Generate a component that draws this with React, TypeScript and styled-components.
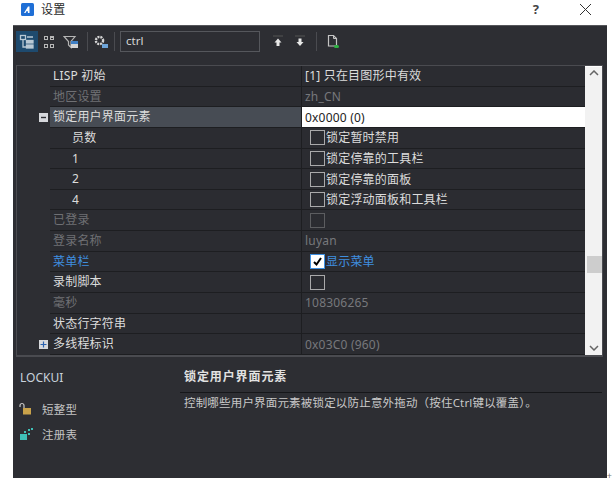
import React from "react";
import styled, { createGlobalStyle } from "styled-components";

const Global = createGlobalStyle`
  html, body { margin: 0; padding: 0; background: #fff; }
  body { font-family: "Noto Sans", "Noto Sans CJK SC", sans-serif; font-size: 12px; }
`;
const Page = styled.div`
  width: 612px; height: 482px; overflow: hidden; background: #fff; display: flex; flex-direction: column; position: relative;
`;
const TitleBar = styled.div`
  height: 25px; display: flex; align-items: center; padding: 0 20px 7px 21px; box-sizing: border-box; color: #333;
`;
const TitleText = styled.span`
  margin-left: 7px; font-size: 12px; letter-spacing: 0.3px; color: #2a2a2a;
`;
const HelpMark = styled.span`
  margin-left: auto; margin-right: 40px; font-size: 13px; font-weight: 700; color: #444;
`;
const Dialog = styled.div`
  margin-left: 13px; width: 594px; height: 453px; background: #2d2e33; border-top: 1px solid #55565a; box-sizing: border-box; display: flex; flex-direction: column;
`;
const Toolbar = styled.div`
  height: 25px; margin-top: 3px; padding-left: 3px; display: flex; align-items: center;
`;
const ToolBtn = styled.div<{ $active?: boolean; $w?: number }>`
  width: ${(p) => p.$w ?? 22}px; height: 21px; display: flex; align-items: center; justify-content: center;
  background: ${(p) => (p.$active ? "#1e4a6e" : "transparent")};
`;
const Sep = styled.div`
  width: 1px; height: 19px; background: #4a4b50; margin: 0 5px;
`;
const SearchBox = styled.div`
  width: 140px; height: 21px; border: 1px solid #55575c; box-sizing: border-box; color: #d8d8d8; font-size: 11.5px; line-height: 18px; padding-left: 5px; margin-right: 7px;
`;
const Grid = styled.div`
  margin: 11px 4px 0 3px; display: flex; height: 292px; border: 1px solid #4a4b50; border-bottom-width: 2px; box-sizing: border-box;
`;
const Rows = styled.div`
  flex: 1; display: flex; flex-direction: column; min-width: 0;
`;
const Row = styled.div`
  height: 20.66px; box-sizing: border-box; display: grid; grid-template-columns: 33px 251px 1fr; border-bottom: 1px solid #1d1e21;
`;
const Gutter = styled.div`
  background: #2d2e33; display: flex; align-items: center; justify-content: flex-end; padding-right: 2px; margin-bottom: -1px;
`;
const Name = styled.div<{ $tone?: string; $indent?: boolean; $selected?: boolean }>`
  background: ${(p) => (p.$selected ? "#474c54" : "#2b2c31")};
  color: ${(p) => (p.$tone === "off" ? "#6f7074" : p.$tone === "link" ? "#3f8fe0" : "#dcdcdc")};
  padding-left: ${(p) => (p.$indent ? 22 : 3)}px; font-size: 12px; line-height: 19px; white-space: nowrap; letter-spacing: 0.2px;
`;
const Value = styled.div<{ $tone?: string; $editing?: boolean }>`
  background: ${(p) => (p.$editing ? "#fff" : "#2b2c31")};
  color: ${(p) => (p.$editing ? "#222" : p.$tone === "off" ? "#77787c" : p.$tone === "link" ? "#3f8fe0" : "#dcdcdc")};
  border-left: 1px solid #1d1e21; padding-left: ${(p) => (p.$editing ? 3 : 3)}px; display: flex; align-items: center; font-size: 12px; line-height: 19px; white-space: nowrap; letter-spacing: 0.2px;
`;
const CheckValue = styled.div`
  margin-left: 5px; display: flex; align-items: center; gap: 1px;
`;
const Box = styled.div<{ $off?: boolean; $checked?: boolean }>`
  width: 15px; height: 15px; box-sizing: border-box; border: 1px solid ${(p) => (p.$off ? "#5c5d60" : p.$checked ? "#3f8fe0" : "#a9a9aa")};
  background: ${(p) => (p.$checked ? "#fff" : "transparent")}; display: flex; align-items: center; justify-content: center;
`;
const Expander = styled.div`
  width: 9px; height: 9px; background: #d6d8dc; position: relative; display: flex; align-items: center; justify-content: center;
`;
const Scrollbar = styled.div`
  width: 17px; background: #f2f2f2; display: flex; flex-direction: column; align-items: center; padding: 3px 0 4px; box-sizing: border-box; justify-content: space-between; position: relative; border-top: 1px solid #fff;
`;
const Thumb = styled.div`
  position: absolute; top: 189px; left: 2px; width: 15px; height: 17px; background: #cdcdcd;
`;
const Info = styled.div`
  flex: 1; display: flex; padding-left: 7px; margin-top: 8px;
`;
const InfoLeft = styled.div`
  width: 160px; color: #d0d0d0;
`;
const Sysvar = styled.div`
  font-size: 12px; line-height: 16px; color: #c8d2dc; margin-top: 5px; margin-bottom: 15px; margin-left: 0;
`;
const Prop = styled.div`
  display: flex; align-items: center; gap: 9px; font-size: 11.5px; height: 16px; margin-bottom: 8.5px; margin-left: -1px; color: #c4c4c4; letter-spacing: 0.3px;
`;
const InfoRight = styled.div`
  flex: 1; margin-right: 5px;
`;
const InfoTitle = styled.div`
  font-size: 12px; font-weight: 700; color: #e2e2e2; height: 27px; line-height: 24px; border-bottom: 1px solid #16171a; padding-left: 4px; letter-spacing: 0.9px; margin-top: 0;
`;
const InfoBody = styled.div`
  font-size: 11.5px; color: #c8c8c8; padding-left: 4px; line-height: 20px; white-space: nowrap; letter-spacing: 0.18px;
`;
const Tick = styled.span`
  position: absolute; right: 0; bottom: 2px; font-size: 9px; color: #777; line-height: 9px;
`;

const ico = { width: 16, height: 16, viewBox: "0 0 16 16" };
const Minus = () => <Expander><svg width="7" height="7" viewBox="0 0 7 7"><path d="M1 3.5h5" stroke="#2d2e33" strokeWidth="1.4" /></svg></Expander>;
const Plus = () => <Expander><svg width="7" height="7" viewBox="0 0 7 7"><path d="M.5 3.5h6M3.5.5v6" stroke="#2a62b0" strokeWidth="1.2" /></svg></Expander>;

type R = { name: string; val?: string; tone?: string; indent?: boolean; selected?: boolean; editing?: boolean; check?: boolean; checked?: boolean; exp?: "minus" | "plus"; valTone?: string };
const rows: R[] = [
  { name: "LISP 初始", val: "[1] 只在目图形中有效" },
  { name: "地区设置", val: "zh_CN", tone: "off", valTone: "off" },
  { name: "锁定用户界面元素", val: "0x0000 (0)", selected: true, editing: true, exp: "minus" },
  { name: "员数", val: "锁定暂时禁用", indent: true, check: true },
  { name: "1", val: "锁定停靠的工具栏", indent: true, check: true },
  { name: "2", val: "锁定停靠的面板", indent: true, check: true },
  { name: "4", val: "锁定浮动面板和工具栏", indent: true, check: true },
  { name: "已登录", tone: "off", check: true, valTone: "off" },
  { name: "登录名称", val: "luyan", tone: "off", valTone: "off" },
  { name: "菜单栏", val: "显示菜单", tone: "link", valTone: "link", check: true, checked: true },
  { name: "录制脚本", check: true },
  { name: "毫秒", val: "108306265", tone: "off", valTone: "off" },
  { name: "状态行字符串", val: "" },
  { name: "多线程标识", val: "0x03C0 (960)", exp: "plus", valTone: "off" },
];

export default function App() {
  return (
    <Page>
      <Global />
      <TitleBar>
        <svg width="13" height="13" viewBox="0 0 13 13"><rect width="13" height="13" rx="1.5" fill="#1f6fd6" /><path d="M3 10 L7 3.5 h1.5 v6.5 h-1.6 v-1.8 h-1.6 L4.6 10z" fill="#fff" /></svg>
        <TitleText>设置</TitleText>
        <HelpMark>?</HelpMark>
        <svg width="13" height="13" viewBox="0 0 13 13"><path d="M1 1l11 11M12 1L1 12" stroke="#333" strokeWidth="1" /></svg>
      </TitleBar>
      <Dialog>
        <Toolbar>
          <ToolBtn $active>
            <svg {...ico}><g fill="none" stroke="#b9c8d4" strokeWidth="1.3"><rect x="1.5" y="1.5" width="5" height="4" /><path d="M8 3h6M4 6v7h3" /><rect x="7.5" y="6.5" width="6.5" height="2.5" fill="#b9c8d4" /><rect x="7.5" y="11" width="6.5" height="3" fill="#b9c8d4" /></g></svg>
          </ToolBtn>
          <ToolBtn>
            <svg {...ico}><g fill="#b8b8b8"><rect x="3" y="2" width="4" height="4" /><rect x="9" y="2" width="4" height="4" /><rect x="3" y="10" width="4" height="4" /><rect x="9" y="10" width="4" height="4" /></g><g fill="#2d2e33"><rect x="4" y="3" width="2" height="2" /><rect x="10" y="4" width="2" height="1" /><rect x="4" y="11" width="2" height="2" /><rect x="10" y="11" width="2" height="2" /></g></svg>
          </ToolBtn>
          <ToolBtn>
            <svg {...ico}><path d="M1 2.5h11L8 7.5v6L5.5 11V7.5z" fill="none" stroke="#b5b5b5" strokeWidth="1.2" /><rect x="8" y="7" width="7" height="3" fill="#3f7fc4" /><rect x="8" y="10" width="7" height="4" fill="#d4d4d4" /></svg>
          </ToolBtn>
          <Sep />
          <ToolBtn $w={16}>
            <svg {...ico}><circle cx="6.5" cy="6.5" r="3.6" fill="none" stroke="#d5d5d5" strokeWidth="2.4" strokeDasharray="2 .9" /><rect x="9" y="10" width="6" height="4" fill="#6ea4d8" /></svg>
          </ToolBtn>
          <Sep />
          <SearchBox>ctrl</SearchBox>
          <ToolBtn>
            <svg {...ico}><path d="M3 2h10" stroke="#555" /><path d="M8 4.5l3.5 4H9.5V12h-3V8.5h-2z" fill="#e8e8e8" /></svg>
          </ToolBtn>
          <ToolBtn>
            <svg {...ico}><path d="M3 2h10" stroke="#555" /><path d="M8 12l3.5-4H9.5V4.5h-3V8h-2z" fill="#e8e8e8" /></svg>
          </ToolBtn>
          <Sep />
          <ToolBtn>
            <svg {...ico}><path d="M3.5 1.5h5l3 3V12h-8z" fill="none" stroke="#c4c4c4" strokeWidth="1.2" /><path d="M8.5 1.5v3h3" fill="none" stroke="#c4c4c4" /><rect x="9" y="11" width="5" height="3" rx="1.5" fill="#2fb344" /></svg>
          </ToolBtn>
        </Toolbar>
        <Grid>
          <Rows>
            {rows.map((r) => (
              <Row key={r.name}>
                <Gutter>{r.exp === "minus" ? <Minus /> : r.exp === "plus" ? <Plus /> : null}</Gutter>
                <Name $tone={r.tone} $indent={r.indent} $selected={r.selected}>{r.name}</Name>
                <Value $tone={r.valTone} $editing={r.editing}>
                  {r.check ? (
                    <CheckValue>
                      <Box $off={r.valTone === "off"} $checked={r.checked}>
                        {r.checked && <svg width="11" height="11" viewBox="0 0 11 11"><path d="M2 6l2.5 2.5L9 2" fill="none" stroke="#000" strokeWidth="2" /></svg>}
                      </Box>
                      {r.val}
                    </CheckValue>
                  ) : r.val}
                </Value>
              </Row>
            ))}
          </Rows>
          <Scrollbar>
            <svg width="10" height="6" viewBox="0 0 10 6"><path d="M1 5l4-4 4 4" fill="none" stroke="#666" strokeWidth="1.5" /></svg>
            <Thumb />
            <svg width="10" height="6" viewBox="0 0 10 6"><path d="M1 1l4 4 4-4" fill="none" stroke="#666" strokeWidth="1.5" /></svg>
          </Scrollbar>
        </Grid>
        <Info>
          <InfoLeft>
            <Sysvar>LOCKUI</Sysvar>
            <Prop>
              <svg width="14" height="14" viewBox="0 0 14 14"><path d="M1 5V3.5a2 2 0 0 1 4 0V6" fill="none" stroke="#c8c8c8" strokeWidth="1.2" /><rect x="4" y="6" width="8" height="6.5" fill="#c9a24a" /></svg>
              短整型
            </Prop>
            <Prop>
              <svg width="14" height="14" viewBox="0 0 14 14"><g fill="#3fc0b8"><rect x="1" y="7" width="7" height="6" /><rect x="9" y="2" width="2" height="2" /><rect x="12" y="1" width="2" height="2" /><rect x="9" y="6" width="2" height="2" /><rect x="5" y="4" width="2" height="2" /></g></svg>
              注册表
            </Prop>
          </InfoLeft>
          <InfoRight>
            <InfoTitle>锁定用户界面元素</InfoTitle>
            <InfoBody>控制哪些用户界面元素被锁定以防止意外拖动（按住Ctrl键以覆盖）。</InfoBody>
          </InfoRight>
        </Info>
      </Dialog>
      <Tick>+</Tick>
    </Page>
  );
}
